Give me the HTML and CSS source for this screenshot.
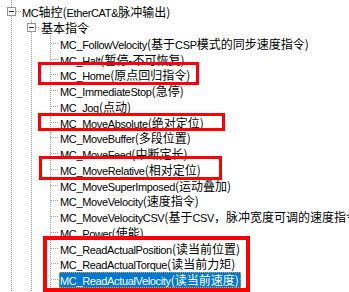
FILE: index.html
```html
<!DOCTYPE html>
<html lang="zh-CN">
<head>
  <meta charset="UTF-8">
  <title>MC轴控指令</title>
  <link rel="stylesheet" href="styles.css">
</head>
<body>
  <div class="tree">
    <div class="row l1"><span class="exp"></span><span class="dash"></span><span class="txt">MC<span class="zh">轴控(</span>EtherCAT&amp;<span class="zh">脉冲输出)</span></span></div>
    <div class="kids k1">
      <div class="row l2"><span class="exp"></span><span class="dash"></span><span class="txt"><span class="zh">基本指令</span></span></div>
      <div class="kids k2">
        <div class="row l3"><span class="dash"></span><span class="txt">MC_FollowVelocity<span class="zh">(基于</span>CSP<span class="zh">模式的同步速度指令)</span></span></div>
        <div class="row l3"><span class="dash"></span><span class="txt">MC_Halt<span class="zh">(暂停-不可恢复)</span></span></div>
        <div class="row l3"><span class="dash"></span><span class="txt">MC_Home<span class="zh">(原点回归指令)</span></span></div>
        <div class="row l3"><span class="dash"></span><span class="txt">MC_ImmediateStop<span class="zh">(急停)</span></span></div>
        <div class="row l3"><span class="dash"></span><span class="txt">MC_Jog<span class="zh">(点动)</span></span></div>
        <div class="row l3"><span class="dash"></span><span class="txt">MC_MoveAbsolute<span class="zh">(绝对定位)</span></span></div>
        <div class="row l3"><span class="dash"></span><span class="txt">MC_MoveBuffer<span class="zh">(多段位置)</span></span></div>
        <div class="row l3"><span class="dash"></span><span class="txt">MC_MoveFeed<span class="zh">(中断定长)</span></span></div>
        <div class="row l3"><span class="dash"></span><span class="txt">MC_MoveRelative<span class="zh">(相对定位)</span></span></div>
        <div class="row l3"><span class="dash"></span><span class="txt">MC_MoveSuperImposed<span class="zh">(运动叠加)</span></span></div>
        <div class="row l3"><span class="dash"></span><span class="txt">MC_MoveVelocity<span class="zh">(速度指令)</span></span></div>
        <div class="row l3"><span class="dash"></span><span class="txt">MC_MoveVelocityCSV<span class="zh">(基于</span>CSV<span class="zh">，脉冲宽度可调的速度指令)</span></span></div>
        <div class="row l3"><span class="dash"></span><span class="txt">MC_Power<span class="zh">(使能)</span></span></div>
        <div class="row l3"><span class="dash"></span><span class="txt">MC_ReadActualPosition<span class="zh">(读当前位置)</span></span></div>
        <div class="row l3"><span class="dash"></span><span class="txt">MC_ReadActualTorque<span class="zh">(读当前力矩)</span></span></div>
        <div class="row l3 sel"><span class="dash"></span><span class="txt">MC_ReadActualVelocity<span class="zh">(读当前速度)</span></span></div>
      </div>
    </div>
  </div>

  <!-- red annotation frames drawn over the tree -->
  <div class="mark m1"></div>
  <div class="mark m2"></div>
  <div class="mark m3"></div>
  <div class="mark m4"></div>
</body>
</html>
```

FILE: styles.css
```css
html, body {
  margin: 0;
  height: 100%;
  background: #fff;
  overflow: hidden;
}
body {
  position: relative;
  font-family: "Liberation Sans", Arial, sans-serif;
  font-size: 11px;
  color: #000;
}
.tree {
  padding-top: 4px;
  min-height: 300px;
  background-image: linear-gradient(#a0a0a0 50%, transparent 0);
  background-size: 1px 2px;
  background-repeat: repeat-y;
  background-position: 11px 0;
}
.k1 {
  background-image: linear-gradient(#a0a0a0 50%, transparent 0);
  background-size: 1px 2px;
  background-repeat: repeat-y;
  background-position: 31px 0;
}
.k2 {
  background-image: linear-gradient(#a0a0a0 50%, transparent 0);
  background-size: 1px 2px;
  background-repeat: repeat-y;
  background-position: 50px 0;
  min-height: 260px;
}
.row {
  display: flex;
  align-items: center;
  height: 15.75px;
  white-space: nowrap;
}
.l1 { padding-left: 7px; }
.l2 { padding-left: 27px; }
.l3 { padding-left: 51px; }
.exp {
  box-sizing: border-box;
  width: 9px;
  height: 9px;
  border: 1px solid #959595;
  background: #fff;
  display: flex;
  align-items: center;
  justify-content: center;
  flex: none;
}
.exp::after {
  content: "";
  width: 5px;
  height: 1px;
  background: #2a2a2a;
}
.dash {
  height: 1px;
  flex: none;
  background-image: linear-gradient(to right, #a0a0a0 50%, transparent 0);
  background-size: 2px 1px;
}
.l1 .dash { width: 5px; }
.l2 .dash { width: 4px; }
.l3 .dash { width: 8px; }
.txt {
  display: block;
  height: 15px;
  line-height: 15px;
  padding: 0 2px 0 1px;
  letter-spacing: -0.35px;
}
.zh {
  font-family: "Noto Sans CJK SC", sans-serif;
  font-size: 12px;
  letter-spacing: 0;
}
.sel .txt {
  box-sizing: border-box;
  height: 16px;
  background: #0078d7;
  color: #fff;
  outline: 1px dotted #f0a030;
  outline-offset: -1px;
}
.mark {
  position: absolute;
  box-sizing: border-box;
  border: 3px solid #f00;
}
.m1 { left: 38px; top: 62px; width: 161px; height: 23px; }
.m2 { left: 38px; top: 113px; width: 187px; height: 18px; }
.m3 { left: 39px; top: 156px; width: 183px; height: 24px; }
.m4 { left: 43px; top: 236px; width: 207px; height: 56px; border-width: 4px; }
```
